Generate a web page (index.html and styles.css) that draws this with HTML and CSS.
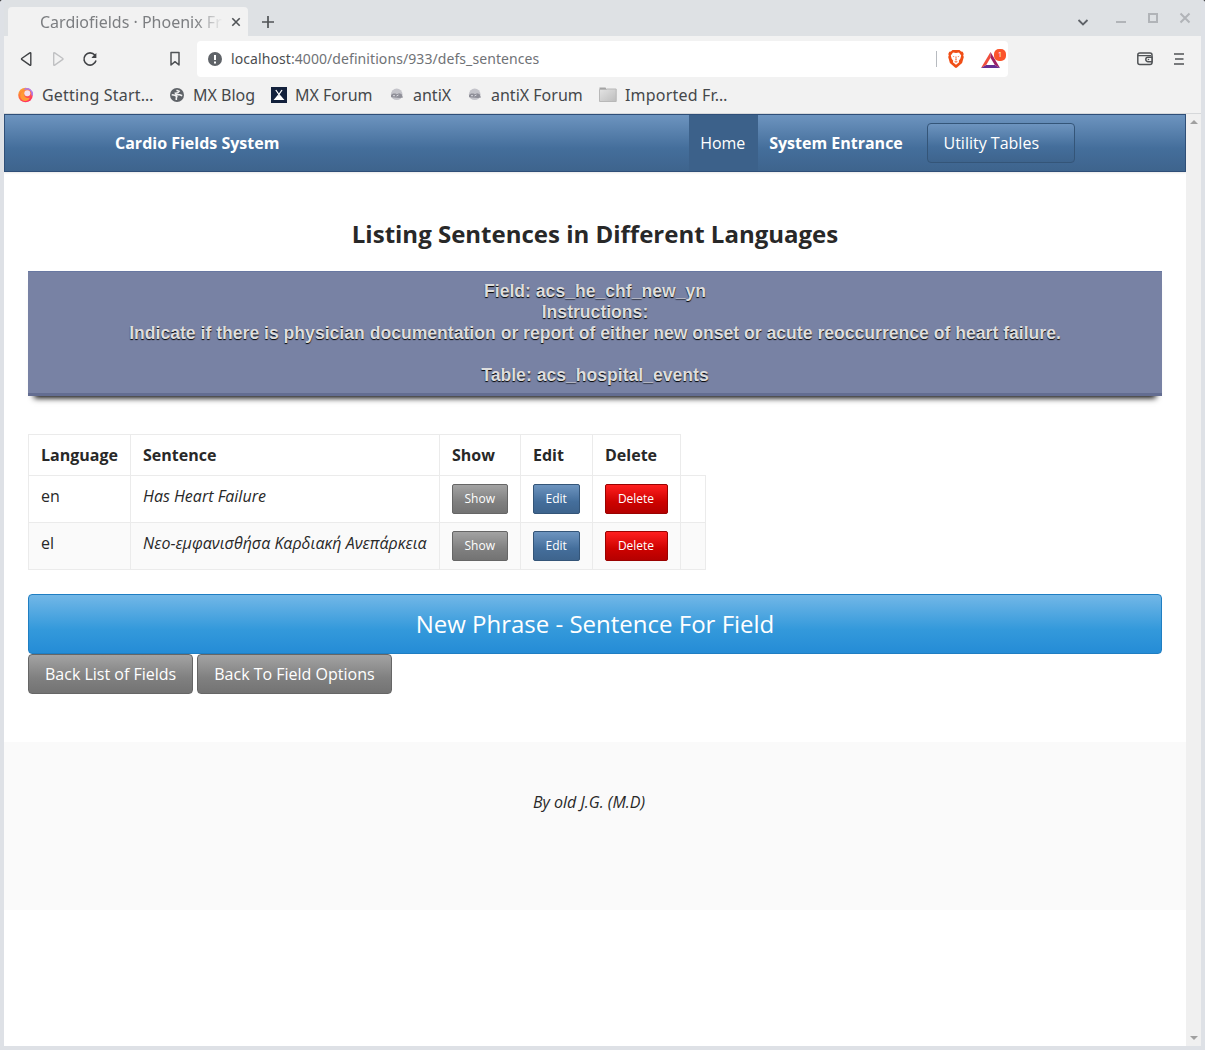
FILE: index.html
```html
<!DOCTYPE html>
<html lang="en">
<head>
<meta charset="utf-8">
<title>Cardiofields · Phoenix Framework</title>
<link rel="stylesheet" href="styles.css">
</head>
<body>
<div class="window">
  <header class="tabstrip">
    <div class="tab"><span class="tab-title">Cardiofields · Phoenix Fr</span>
      <svg class="tab-close" width="10" height="10" viewBox="0 0 10 10"><path d="M1.3 1.3l7.4 7.4M8.7 1.3L1.3 8.7" stroke="#505356" stroke-width="1.6"/></svg>
    </div>
    <svg class="new-tab" width="12" height="12" viewBox="0 0 12 12"><path d="M6 0v12M0 6h12" stroke="#505356" stroke-width="1.7"/></svg>
    <div class="window-controls">
      <svg width="12" height="12" viewBox="0 0 12 12"><path d="M1.5 5l4.500 4.500L10.500 5" fill="none" stroke="#5f6368" stroke-width="1.8"/></svg>
      <svg width="12" height="12" viewBox="0 0 12 12"><path d="M1 10h10" stroke="#b1b4b8" stroke-width="2"/></svg>
      <svg width="12" height="12" viewBox="0 0 12 12"><path d="M2 2h8v8H2z" fill="none" stroke="#b1b4b8" stroke-width="2"/></svg>
      <svg width="12" height="12" viewBox="0 0 12 12"><path d="M1.500 1.500l9 9M10.500 1.500l-9 9" stroke="#b1b4b8" stroke-width="2"/></svg>
    </div>
  </header>
  <div class="toolbar">
    <div class="nav-icons">
      <svg width="16" height="16" viewBox="0 0 16 16"><path d="M12.800 2.200v11.600Q12.800 14.800 11.800 14.100L4 8.700Q3 8 4 7.300L11.800 1.900Q12.800 1.200 12.800 2.200z" fill="none" stroke="#414346" stroke-width="1.4"/></svg>
      <svg width="16" height="16" viewBox="0 0 16 16"><path d="M3.700 2.200v11.600Q3.700 14.800 4.700 14.100L12.500 8.700Q13.500 8 12.500 7.300L4.700 1.900Q3.700 1.200 3.700 2.200z" fill="none" stroke="#c0c1c3" stroke-width="1.400"/></svg>
      <svg width="16" height="16" viewBox="0 0 16 16"><path d="M12.800 4.100A6.100 6.100 0 1 0 14 9.500" fill="none" stroke="#414346" stroke-width="1.600"/><path d="M14.400 1.900v5H9.500l1.500-2z" fill="#414346"/></svg>
    </div>
    <svg class="bookmark" width="16" height="16" viewBox="0 0 16 16"><path d="M4 1.500h8v12.500l-4-3.300L4 14z" fill="none" stroke="#505356" stroke-width="1.500" stroke-linejoin="round"/></svg>
    <div class="address">
      <svg width="14" height="14" viewBox="0 0 14 14"><circle cx="7" cy="7" r="7" fill="#5f6368"/><path d="M7 3v5M7 9.500v2" stroke="#fff" stroke-width="2"/></svg>
      <span class="url">localhost<i>:4000/definitions/933/defs_sentences</i></span>
      <span class="divider"></span>
      <svg class="brave" width="16" height="18" viewBox="0 0 16 18"><path d="M4.500 0h7l1.600 1.500 1.600.2 1 2.200-.5 1.500.6 1.500-1.700 6-5.100 4.700L8 18l-1-.4-5.100-4.700-1.700-6 .6-1.500L.3 3.900l1-2.200 1.600-.2z" fill="#f04e16"/><path d="M5 2.600l3 .5 3-.5 2.200 2.800-.9 3.300-1.500 2 .3 1.600-3.100 2.500-3.100-2.500.3-1.600-1.500-2-.9-3.300z" fill="#fff"/><path d="M4.300 5.700l2.100.6-.5 1zM11.700 5.700l-2.100.6.5 1zM7.300 6.500h1.400L8.400 9l.7 1-1.100.6-1.100-.6.700-1zM6 11.800l2-.7 2 .7-2 .9z" fill="#f5794f"/></svg>
      <div class="rewards">
        <svg width="19" height="16" viewBox="0 0 19 16"><path d="M9.500 0v5.800L5.200 13 0 16z" fill="#f04e3c"/><path d="M9.500 0L19 16l-5.200-3-4.300-7.200z" fill="#9e1f63"/><path d="M0 16l5.200-3h8.600L19 16z" fill="#662d91"/></svg>
        <span class="badge">1</span>
      </div>
    </div>
    <div class="menu-icons">
      <svg width="16" height="14" viewBox="0 0 16 14"><rect x=".8" y="1" width="14.200" height="11.500" rx="2" fill="none" stroke="#505356" stroke-width="1.500"/><path d="M1 3.600h13" stroke="#505356" stroke-width="1.300"/><path d="M15 5.300h-4a2.200 2.200 0 0 0 0 4.400h4z" fill="#f2f2f2" stroke="#505356" stroke-width="1.500"/><circle cx="11.500" cy="7.500" r=".8" fill="#505356"/></svg>
      <svg width="10" height="12" viewBox="0 0 10 12"><path d="M0 1h10M1 6h8.500M0 11h10" stroke="#505356" stroke-width="1.700"/></svg>
    </div>
  </div>
  <nav class="bookmarks">
    <a class="bm bm-start"><svg width="16" height="16" viewBox="0 0 16 16"><defs><linearGradient id="g" x1="0" y1="0" x2=".5" y2="1"><stop offset="0" stop-color="#ffbd2e"/><stop offset=".5" stop-color="#ff7139"/><stop offset="1" stop-color="#ff3264"/></linearGradient></defs><circle cx="7.500" cy="8" r="7.300" fill="url(#g)"/><path d="M5 4.500a5 5 0 1 0 7 6 4 4 0 0 1-6-2.500A3.400 3.400 0 0 1 10 4z" fill="#ff9a35"/><circle cx="9.300" cy="6.300" r="3" fill="#f4e0ee"/><path d="M6.500 2.500A5.200 5.200 0 0 1 14 8.500" fill="none" stroke="#b07af0" stroke-width="1.500"/></svg><span class="cut">Getting Start…</span></a>
    <a class="bm bm-blog"><svg width="14" height="14" viewBox="0 0 14 14"><circle cx="7" cy="7" r="7" fill="#5f6368"/><path d="M6.500 2.200L9 3.300 7.700 4.800 5.500 5.300l1 1.500h3.300l2.400 1M1.700 6.800l3.200.5 1.900 1.200-.5 1.600v1.900" fill="none" stroke="#f2f2f2" stroke-width="1.600"/></svg><span>MX Blog</span></a>
    <a class="bm bm-forum"><svg width="16" height="16" viewBox="0 0 16 16"><path d="M0 0h16v16H0z" fill="#13213c"/><path d="M2.500 13l4-4.500 1.500.8 1.500-.8 4 4.500z" fill="#fff"/><path d="M4.800 3l6 8.500M11 3l-5.500 8" stroke="#fff" stroke-width="1.300"/></svg><span>MX Forum</span></a>
    <a class="bm bm-antix"><svg width="14" height="14" viewBox="0 0 14 14"><circle cx="6.700" cy="6.300" r="5.800" fill="#c4c4ca"/><path d="M1 9.300V7l2-1.500h2.500L7 6.200l2-.9 2.500.7L13 9.500 10 10z" fill="#8f8f98"/><path d="M3 7.700h2M6.500 8l2-1" stroke="#dadae0" stroke-width="1"/></svg><span>antiX</span></a>
    <a class="bm bm-antixf"><svg width="14" height="14" viewBox="0 0 14 14"><circle cx="6.700" cy="6.300" r="5.800" fill="#c4c4ca"/><path d="M1 9.300V7l2-1.500h2.500L7 6.200l2-.9 2.500.7L13 9.500 10 10z" fill="#8f8f98"/><path d="M3 7.700h2M6.500 8l2-1" stroke="#dadae0" stroke-width="1"/></svg><span>antiX Forum</span></a>
    <a class="bm bm-import"><svg width="18" height="16" viewBox="0 0 18 16"><defs><linearGradient id="f" x1="0" y1="0" x2="1" y2="1"><stop offset="0" stop-color="#e4e4e4"/><stop offset="1" stop-color="#bdbdbd"/></linearGradient></defs><path d="M.5 4V.5h6l1 1.500H16v3H.5z" fill="#a5a5a5"/><path d="M.5 2.500h6.700l1-.5h9V14.500H.500z" fill="url(#f)" stroke="#b8b8b8"/></svg><span class="cut">Imported Fr…</span></a>
  </nav>
  <div class="viewport">
    <div class="page">
      <nav class="navbar">
        <strong class="brand">Cardio Fields System</strong>
        <div class="nav-end">
          <a class="nav-item active">Home</a>
          <a class="nav-item"><strong>System Entrance</strong></a>
          <a class="btn link utility">Utility Tables</a>
        </div>
      </nav>
      <main class="section">
        <h1>Listing Sentences in Different Languages</h1>
        <div class="info">Field: acs_he_chf_new_yn<br>Instructions:<br>Indicate if there is physician documentation or report of either new onset or acute reoccurrence of heart failure.<br><br>Table: acs_hospital_events</div>
        <table>
          <colgroup><col class="c1"><col class="c2"><col class="c3"><col class="c4"><col class="c5"><col class="c6"></colgroup>
          <thead><tr><th>Language</th><th>Sentence</th><th>Show</th><th>Edit</th><th>Delete</th></tr></thead>
          <tbody>
            <tr><td>en</td><td><em>Has Heart Failure</em></td><td><a class="btn small grey">Show</a></td><td><a class="btn small link">Edit</a></td><td><a class="btn small danger">Delete</a></td><td></td></tr>
            <tr><td>el</td><td><em>Νεο-εμφανισθήσα Καρδιακή Ανεπάρκεια</em></td><td><a class="btn small grey">Show</a></td><td><a class="btn small link">Edit</a></td><td><a class="btn small danger">Delete</a></td><td></td></tr>
          </tbody>
        </table>
        <a class="btn large info-btn">New Phrase - Sentence For Field</a>
        <div class="actions"><a class="btn grey">Back List of Fields</a><a class="btn grey">Back To Field Options</a></div>
      </main>
      <footer><em>By old J.G. (M.D)</em></footer>
    </div>
    <div class="scrollbar"><i class="up"></i><i class="down"></i></div>
  </div>
</div>
</body>
</html>
```

FILE: styles.css
```css
* { box-sizing: border-box; }
body { margin: 0; background: #000; font-family: "Open Sans", "Noto Sans", sans-serif; }
svg { display: block; flex: none; }

.window {
  width: 1205px; height: 1050px; padding: 0 4px 4px;
  display: flex; flex-direction: column;
  background: #dee1e6; border-radius: 2px 2px 0 0; overflow: hidden;
}

/* browser chrome */
.tabstrip, .toolbar, .bookmarks { font-family: "Noto Sans", sans-serif; white-space: nowrap; flex: none; }
.tabstrip { height: 36px; display: flex; padding-left: 4px; background: #dee1e4; }
.tab {
  width: 240px; height: 29px; margin-top: 7px; padding: 1px 7px 0 32px;
  display: flex; align-items: center; background: #f2f2f2; border-radius: 4px 4px 0 0;
}
.tab-title {
  width: 183px; font-size: 16px; color: #7c7e81;
  -webkit-mask-image: linear-gradient(90deg, #000 155px, transparent 183px);
  mask-image: linear-gradient(90deg, #000 155px, transparent 183px);
}
.tab-close { margin-left: 8px; }
.new-tab { margin: 16px 0 0 14px; }
.window-controls { margin: 12px 10px 0 auto; display: flex; gap: 20px; }
.window-controls svg:first-child { margin: 3px 6px 0 0; }

.toolbar { height: 46px; display: flex; align-items: center; background: #f2f2f2; padding: 0 17px 0 14px; }
.nav-icons { display: flex; gap: 16px; }
.bookmark { margin-left: 69px; }
.address {
  width: 811px; height: 36px; margin-left: 14px; padding: 0 1px 0 11px;
  display: flex; align-items: center; background: #fff; border-radius: 4px;
}
.url { margin-left: 9px; padding-bottom: 2px; font-size: 14px; letter-spacing: .08px; color: #4b4d50; }
.url i { font-style: normal; color: #6f7276; }
.divider { width: 1px; height: 16px; margin-left: auto; background: #b7bbc0; }
.brave { margin-left: 11px; }
.rewards { position: relative; margin: 1px 7px 0 17px; }
.badge {
  position: absolute; left: 13px; top: -3px; width: 12px; height: 12px;
  border-radius: 5px; background: #fb542b; color: #fff; font-size: 7px; line-height: 12px; text-align: center;
}
.menu-icons { margin-left: auto; display: flex; align-items: center; gap: 21px; }

.bookmarks {
  height: 32px; display: flex; background: #f2f2f2; border-bottom: 1px solid #d6d8da;
  padding-left: 14px; font-size: 16px; color: #45484b;
}
.bm { display: flex; align-items: center; height: 26px; }
.bm span { margin-left: 8px; }
.bm .cut { letter-spacing: .2px; }
.bm-start { width: 152px; }
.bm-blog { width: 101px; }
.bm-blog span { margin-left: 9px; }
.bm-forum { width: 119px; }
.bm-antix { width: 78px; }
.bm-antixf { width: 131px; }
.bm-antix span, .bm-antixf span { margin-left: 9px; }

/* page */
.viewport { flex: 1; min-height: 0; display: flex; background: #fff; }
.page { flex: 1; color: #282828; font-size: 16px; line-height: 24px; }
.scrollbar {
  width: 15px; padding: 6px 0 6px; background: #f0f0f0;
  display: flex; flex-direction: column; justify-content: space-between; align-items: center;
}
.scrollbar i { border: 4px solid transparent; }
.scrollbar .up { border-top: 0; border-bottom-color: #a0a0a0; }
.scrollbar .down { border-bottom: 0; border-top-color: #a0a0a0; }

.navbar {
  height: 58px; padding: 0 110px; display: flex; align-items: center; justify-content: space-between;
  color: #fff; border: 1px solid #2f4f78;
  background: linear-gradient(180deg, #6d94bf, #446e9b 60%, #3e648d);
  box-shadow: 0 1px 2px #e8e8e8;
}
.nav-end { height: 100%; display: flex; align-items: center; }
.nav-item { height: 100%; padding: 0 12.2px 0 11.6px; display: flex; align-items: center; }
.active { background: #3c618a; }
.utility { width: 148px; justify-content: flex-start; margin-left: 12px; padding-left: 15.5px; }

.btn {
  height: 40px; padding: 0 16px; display: inline-flex; align-items: center; justify-content: center;
  border: 1px solid; border-radius: 4px; color: #fff; white-space: nowrap;
}
.btn.utility { justify-content: flex-start; padding-left: 15.5px; }
.grey { background: linear-gradient(180deg, #a3a3a3, #808080 60%, #737373); border-color: #666; }
.link { background: linear-gradient(180deg, #6d94bf, #446e9b 60%, #3e648d); border-color: #345578; }
.danger { background: linear-gradient(180deg, #ff1f1f, #cd0200 60%, #b50000); border-color: #9a0200; }
.small { height: 30px; font-size: 12px; padding: 0 12px; border-radius: 2px; vertical-align: top; }
.small.danger { width: 63px; }
.large {
  display: flex; height: 60px; font-size: 24px;
  background: linear-gradient(180deg, #72b7e7, #3399db 60%, #258cd6); border-color: #1f7ec2;
}

.section { padding: 44px 24px 48px; }
h1 { margin: 0; font-size: 24px; line-height: 36px; font-weight: 700; text-align: center; }
.info {
  height: 125px; margin-top: 19px; padding: 9px 0; text-align: center;
  font: 700 17.6px/21px "Liberation Sans", Arial, sans-serif; color: #ddd;
  text-shadow: 0 1px 1px #000;
  background: #7882a4; border-top: 1px solid #6878a2; border-bottom: 3px solid #636d91;
  box-shadow: 0 8px 6px -6px #000;
}
table { width: 678px; margin: 38px 0 24px; table-layout: fixed; border-collapse: collapse; }
th, td { padding: 8px 12px; text-align: left; vertical-align: top; border: 1px solid #ebebeb; white-space: nowrap; }
th { height: 41px; }
td { height: 47px; }
tbody tr:nth-child(2) { background: #fafafa; }
.c1 { width: 102px; } .c2 { width: 309px; } .c3 { width: 81px; }
.c4 { width: 72px; } .c5 { width: 88px; } .c6 { width: 25px; }
td:nth-child(n+3) { padding-left: 11.5px; padding-right: 0; }
.actions { display: flex; gap: 4px; }
footer { height: 168px; padding: 48px 12px 0 0; background: #fafafa; text-align: center; }
```
